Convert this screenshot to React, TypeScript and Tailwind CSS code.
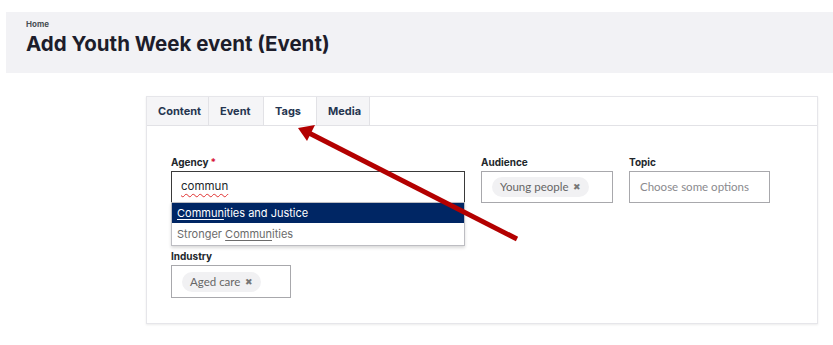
const font = 'font-["Inter","Liberation_Sans",sans-serif]'

function Chip({ label }: { label: string }) {
  return (
    <span className='inline-flex items-center gap-[5px] rounded-full bg-[#f1f1f3] px-[8px] h-[20px] font-["Lato","Liberation_Sans",sans-serif] text-[11.5px] text-[#666]'>
      {label}
      <span className="text-[9px] text-[#777]">✖</span>
    </span>
  )
}

function Field({ label, width, children, required }: { label: string; width: string; children: React.ReactNode; required?: boolean }) {
  return (
    <div className={`flex flex-col ${width}`}>
      <div className="text-[10px] font-bold leading-[12px] text-[#22272b] mb-[3px]">
        {label}
        {required && <span className="text-[#d7153a] ml-[2px]">*</span>}
      </div>
      {children}
    </div>
  )
}

export default function App() {
  const tabs = [
    { t: 'Content', w: 'w-[62px]' },
    { t: 'Event', w: 'w-[55px]' },
    { t: 'Tags', w: 'w-[53px]' },
    { t: 'Media', w: 'w-[53px]' },
  ]
  return (
    <div className={`relative w-[833px] h-[345px] bg-white ${font}`}>
      <div className="ml-[6px] mt-[12px] h-[61px] bg-[#f2f2f5] pl-[20px] pt-[7px]">
        <div className="text-[8px] font-bold text-[#495054] leading-[10px]">Home</div>
        <h1 className="text-[20.5px] font-bold text-[#1d1d2b] leading-[26px] mt-[2px]">Add Youth Week event (Event)</h1>
      </div>

      <div className="ml-[146px] mt-[23px] w-[672px] h-[228px] border border-[#e6e6ea] shadow-[0_1px_2px_rgba(0,0,0,0.08)]">
        <div className="flex h-[29px] border-b border-[#e2e2e6] bg-white">
          {tabs.map(({ t, w }) => (
            <div
              key={t}
              className={`flex items-center pl-[11px] ${w} border-r border-[#e2e2e6] text-[11px] font-bold text-[#253550] ${
                t === 'Tags' ? 'bg-white' : 'bg-[#f5f5f7]'
              }`}
            >
              {t}
            </div>
          ))}
        </div>

        <div className="pl-[24px] pt-[30px]">
          <div className="flex gap-[16px]">
            <Field label="Agency" width="w-[294px]" required>
              <div className="relative">
                <div className="h-[32px] border-[1.5px] border-[#3a3a3a] flex items-center pl-[9px] text-[11.5px] text-[#22272b]">
                  <span className="underline decoration-wavy decoration-[#e03030] decoration-[1px] underline-offset-[3px]">commun</span>
                </div>
                <div className="absolute left-0 top-[31px] w-[294px] bg-white border border-[#bdbdc2] shadow-[0_2px_3px_rgba(0,0,0,0.15)] z-10 text-[11px]">
                  <div className="h-[20px] bg-[#002664] text-white flex items-center pl-[5px]">
                    <span className="underline underline-offset-2">Commun</span>ities and Justice
                  </div>
                  <div className="h-[22px] text-[#6b6b6b] flex items-center pl-[5px]">
                    Stronger&nbsp;<span className="underline underline-offset-2">Commun</span>ities
                  </div>
                </div>
              </div>
            </Field>
            <Field label="Audience" width="w-[132px]">
              <div className="h-[32px] border border-[#a8a8ac] flex items-center pl-[10px]">
                <Chip label="Young people" />
              </div>
            </Field>
            <Field label="Topic" width="w-[141px]">
              <div className='h-[32px] border border-[#a8a8ac] flex items-center pl-[10px] font-["Lato","Liberation_Sans",sans-serif] text-[11.5px] text-[#8a8a8e]'>
                Choose some options
              </div>
            </Field>
          </div>

          <div className="mt-[47px]">
            <Field label="Industry" width="w-[120px]">
              <div className="h-[33px] border border-[#a8a8ac] flex items-center pl-[10px]">
                <Chip label="Aged care" />
              </div>
            </Field>
          </div>
        </div>
      </div>

      <svg className="absolute left-0 top-0 pointer-events-none z-20" width="833" height="345">
        <line x1="517" y1="227" x2="309" y2="121" stroke="#b30000" strokeWidth="5" />
        <polygon points="298,116 315,113 307,129" fill="#b30000" />
      </svg>
    </div>
  )
}
